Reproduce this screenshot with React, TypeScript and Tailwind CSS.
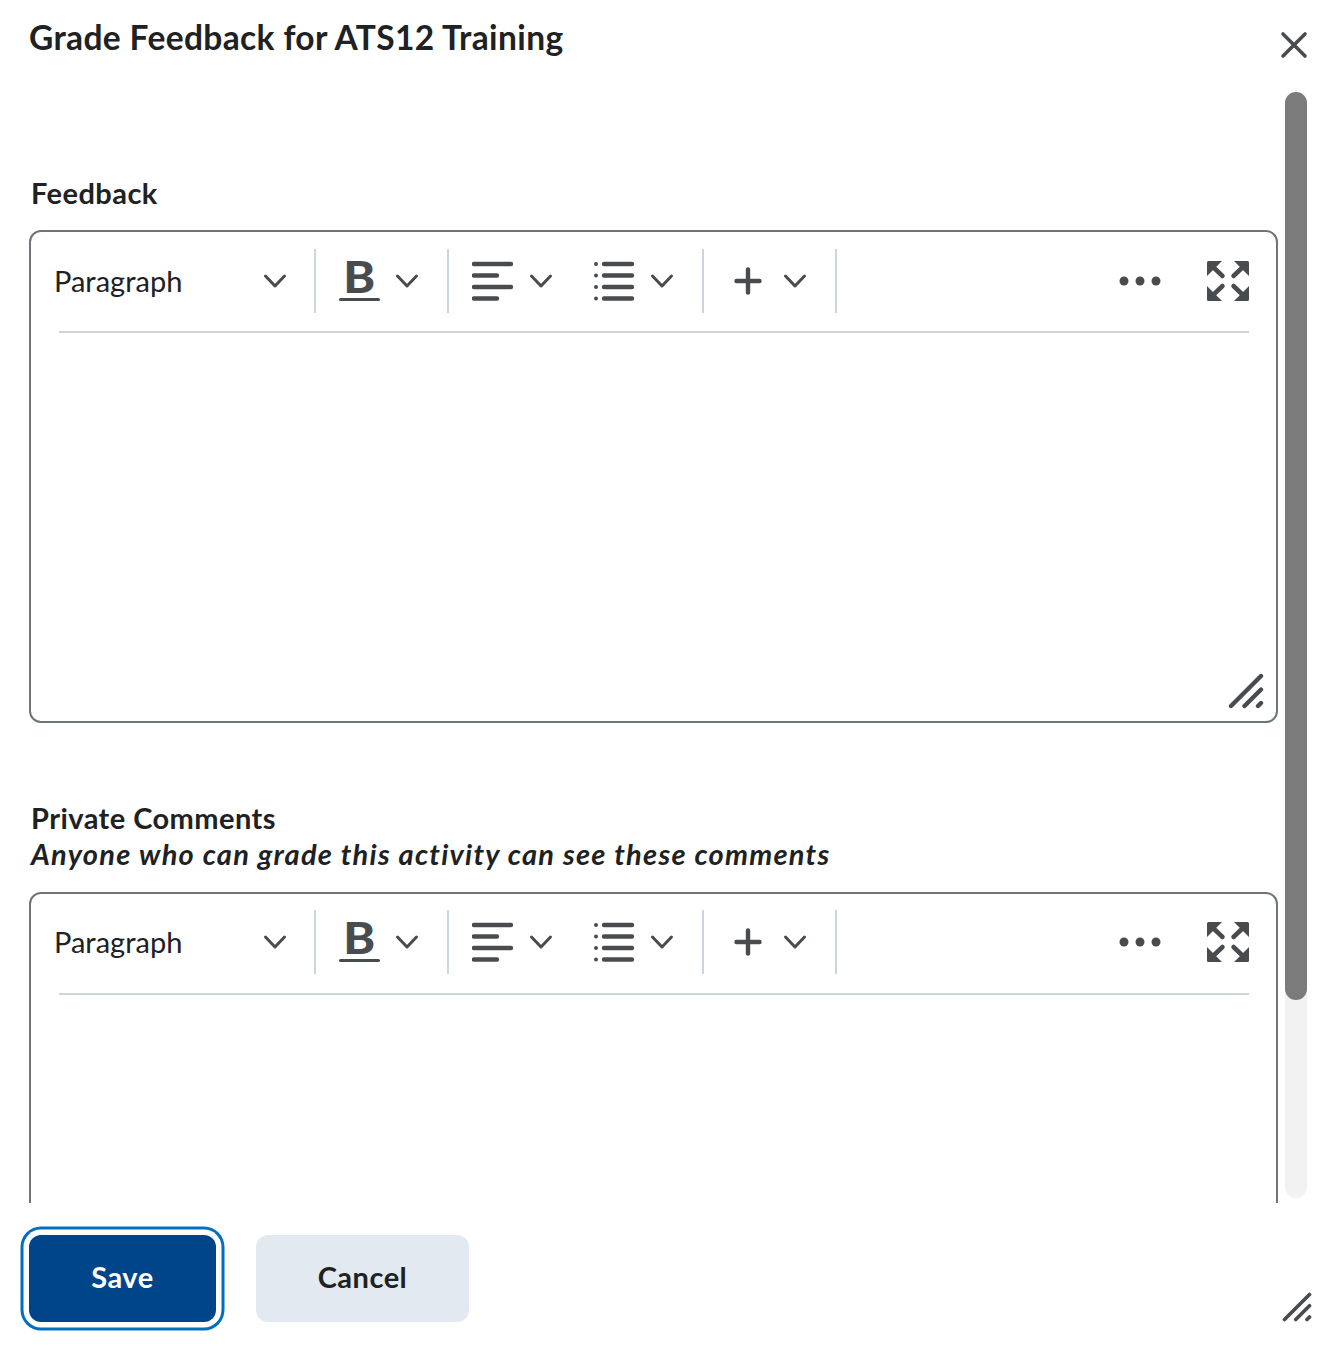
import type { ReactNode } from 'react';

const iconColor = '#494c4e';

function Chevron() {
  return (
    <svg width="24" height="16" viewBox="0 0 24 16" fill="none" className="shrink-0">
      <path d="M2.500 3 L12 13 L21.500 3" stroke={iconColor} strokeWidth="3" strokeLinecap="round" strokeLinejoin="round" />
    </svg>
  );
}

function Divider() {
  return <div className="h-[64px] w-[2px] shrink-0 bg-[#cdd5dc]" />;
}

function BoldIcon() {
  return (
    <span className="flex w-[42px] shrink-0 flex-col items-center">
      <span className="scale-x-[1.12] font-['Lato',sans-serif] text-[43px] leading-[30px] font-black text-[#494c4e]">B</span>
      <span className="mt-[6px] h-[3px] w-[41px] rounded-full bg-[#494c4e]" />
    </span>
  );
}

function AlignIcon() {
  return (
    <svg width="42" height="40" viewBox="0 0 42 40" className="shrink-0" fill="none" stroke={iconColor} strokeWidth="4.400" strokeLinecap="round">
      <path d="M2 3H39M2 14.500H25M2 26H39M2 37.500H25" />
    </svg>
  );
}

function ListIcon() {
  return (
    <svg width="42" height="40" viewBox="0 0 42 40" className="shrink-0" fill="none" stroke={iconColor} strokeWidth="4.400" strokeLinecap="round">
      <path d="M10 3H38M10 14.500H38M10 26H38M10 37.500H38" />
      <g fill={iconColor} stroke="none">
        <circle cx="2" cy="3" r="2" />
        <circle cx="2" cy="14.500" r="2" />
        <circle cx="2" cy="26" r="2" />
        <circle cx="2" cy="37.500" r="2" />
      </g>
    </svg>
  );
}

function PlusIcon() {
  return (
    <svg width="30" height="30" viewBox="0 0 30 30" className="shrink-0" fill="none" stroke={iconColor} strokeWidth="4.400" strokeLinecap="round">
      <path d="M15 3.500V26.500M3.500 15H26.500" />
    </svg>
  );
}

function DotsIcon() {
  return (
    <svg width="42" height="12" viewBox="0 0 42 12" className="shrink-0" fill={iconColor}>
      <circle cx="5" cy="6" r="4.500" />
      <circle cx="21" cy="6" r="4.500" />
      <circle cx="37" cy="6" r="4.500" />
    </svg>
  );
}

function FullscreenIcon() {
  const corner = (
    <>
      <path d="M1.500 0H15L0 15V1.500A1.500 1.500 0 0 1 1.500 0Z" />
      <path d="M5 5L15.500 15" stroke={iconColor} strokeWidth="4.500" strokeLinecap="round" />
    </>
  );
  return (
    <svg width="42" height="42" viewBox="0 0 42 42" className="shrink-0" fill={iconColor}>
      <g transform="translate(0 1)">{corner}</g>
      <g transform="translate(42 1) scale(-1 1)">{corner}</g>
      <g transform="translate(0 41) scale(1 -1)">{corner}</g>
      <g transform="translate(42 41) scale(-1 -1)">{corner}</g>
    </svg>
  );
}

function ResizeIcon({ size = 36 }: { size?: number }) {
  return (
    <svg width={size} height={size} viewBox="0 0 36 36" fill="none" stroke={iconColor} strokeWidth="4.400" strokeLinecap="round" className="shrink-0">
      <path d="M3 33 L33 3M16.500 33 L33 16.500M30 33 L33 30" />
    </svg>
  );
}

function ToolGroup({ children, className }: { children: ReactNode; className: string }) {
  return <div className={`flex shrink-0 items-center ${className}`}>{children}</div>;
}

// one toolbar, same on both editors (second one sits a pixel higher)
function Toolbar({ pad }: { pad: string }) {
  return (
    <div className={`mr-[27px] ml-[28px] flex h-[101px] items-center border-b-2 border-[#cdd5dc] ${pad}`}>
      <ToolGroup className="w-[255px]">
        <span className="ml-[-5px] w-[209px] pb-[1px] font-['Lato',sans-serif] text-[29px] leading-none text-[#202122]">Paragraph</span>
        <Chevron />
      </ToolGroup>
      <Divider />
      <ToolGroup className="w-[131px] gap-[15px] pl-[22px]">
        <BoldIcon />
        <Chevron />
      </ToolGroup>
      <Divider />
      <ToolGroup className="w-[253px] pl-[23px]">
        <AlignIcon />
        <div className="ml-[15px]">
          <Chevron />
        </div>
        <div className="ml-[41px]">
          <ListIcon />
        </div>
        <div className="ml-[14px]">
          <Chevron />
        </div>
      </ToolGroup>
      <Divider />
      <ToolGroup className="w-[131px] gap-[20px] pl-[29px]">
        <PlusIcon />
        <Chevron />
      </ToolGroup>
      <Divider />
      <div className="flex flex-1 items-center justify-end gap-[46px]">
        <DotsIcon />
        <FullscreenIcon />
      </div>
    </div>
  );
}

function Editor({ height, pad }: { height: string; pad: string }) {
  return (
    <div className={`relative shrink-0 rounded-[12px] border-2 border-[#6e7477] bg-white ${height}`}>
      <Toolbar pad={pad} />
      <div className="absolute right-[12px] bottom-[12px]">
        <ResizeIcon />
      </div>
    </div>
  );
}

export default function App() {
  return (
    <div className="flex h-[1346px] w-[1322px] flex-col overflow-hidden bg-white font-['Lato',sans-serif] text-[#202122]">
      {/* Header */}
      <div className="flex h-[92px] shrink-0 justify-between pr-[14px] pl-[29px]">
        <h1 className="mt-[15px] text-[33.500px] leading-[44px] font-bold tracking-[0.37px]">Grade Feedback for ATS12 Training</h1>
        <svg width="28" height="28" viewBox="0 0 28 28" fill="none" stroke={iconColor} strokeWidth="3.600" strokeLinecap="round" className="mt-[31px]">
          <path d="M3 3 L25 25M25 3 L3 25" />
        </svg>
      </div>

      {/* Body */}
      <div className="flex h-[1111px] shrink-0 items-start">
        <div className="ml-[29px] h-full w-[1249px] shrink-0 overflow-hidden">
          <div className="mt-[83px] mb-[19px] pl-[2px] text-[29px] leading-[36px] font-bold tracking-[0.45px]">Feedback</div>
          <Editor height="h-[493px]" pad="pb-[1px]" />
          <div className="mt-[77px] mb-[20px] pl-[2px] text-[29px] leading-[36px] font-bold">
            <div className="tracking-[0.45px]">Private Comments</div>
            <div className="tracking-[1.26px] italic">Anyone who can grade this activity can see these comments</div>
          </div>
          <Editor height="h-[493px]" pad="pb-[3px]" />
        </div>
        <div className="ml-[7px] h-[1106px] w-[22px] shrink-0 rounded-full bg-[#f2f2f2]">
          <div className="h-[908px] w-full rounded-full bg-[#7b7b7b]" />
        </div>
      </div>

      {/* Footer */}
      <div className="flex flex-1 items-start pt-[32px] pl-[29px]">
        <button className="h-[87px] w-[187px] rounded-[12px] bg-[#004489] pb-[3px] text-[29px] font-bold tracking-[0.5px] text-white ring-[3px] ring-[#006fbf] ring-offset-[5.500px] ring-offset-white">
          Save
        </button>
        <button className="ml-[40px] h-[87px] w-[213px] rounded-[12px] bg-[#e3e9f1] pb-[3px] text-[29px] font-bold tracking-[0.5px] text-[#202122]">
          Cancel
        </button>
        <div className="mt-[57px] mr-[10px] ml-auto">
          <ResizeIcon size={30} />
        </div>
      </div>
    </div>
  );
}
